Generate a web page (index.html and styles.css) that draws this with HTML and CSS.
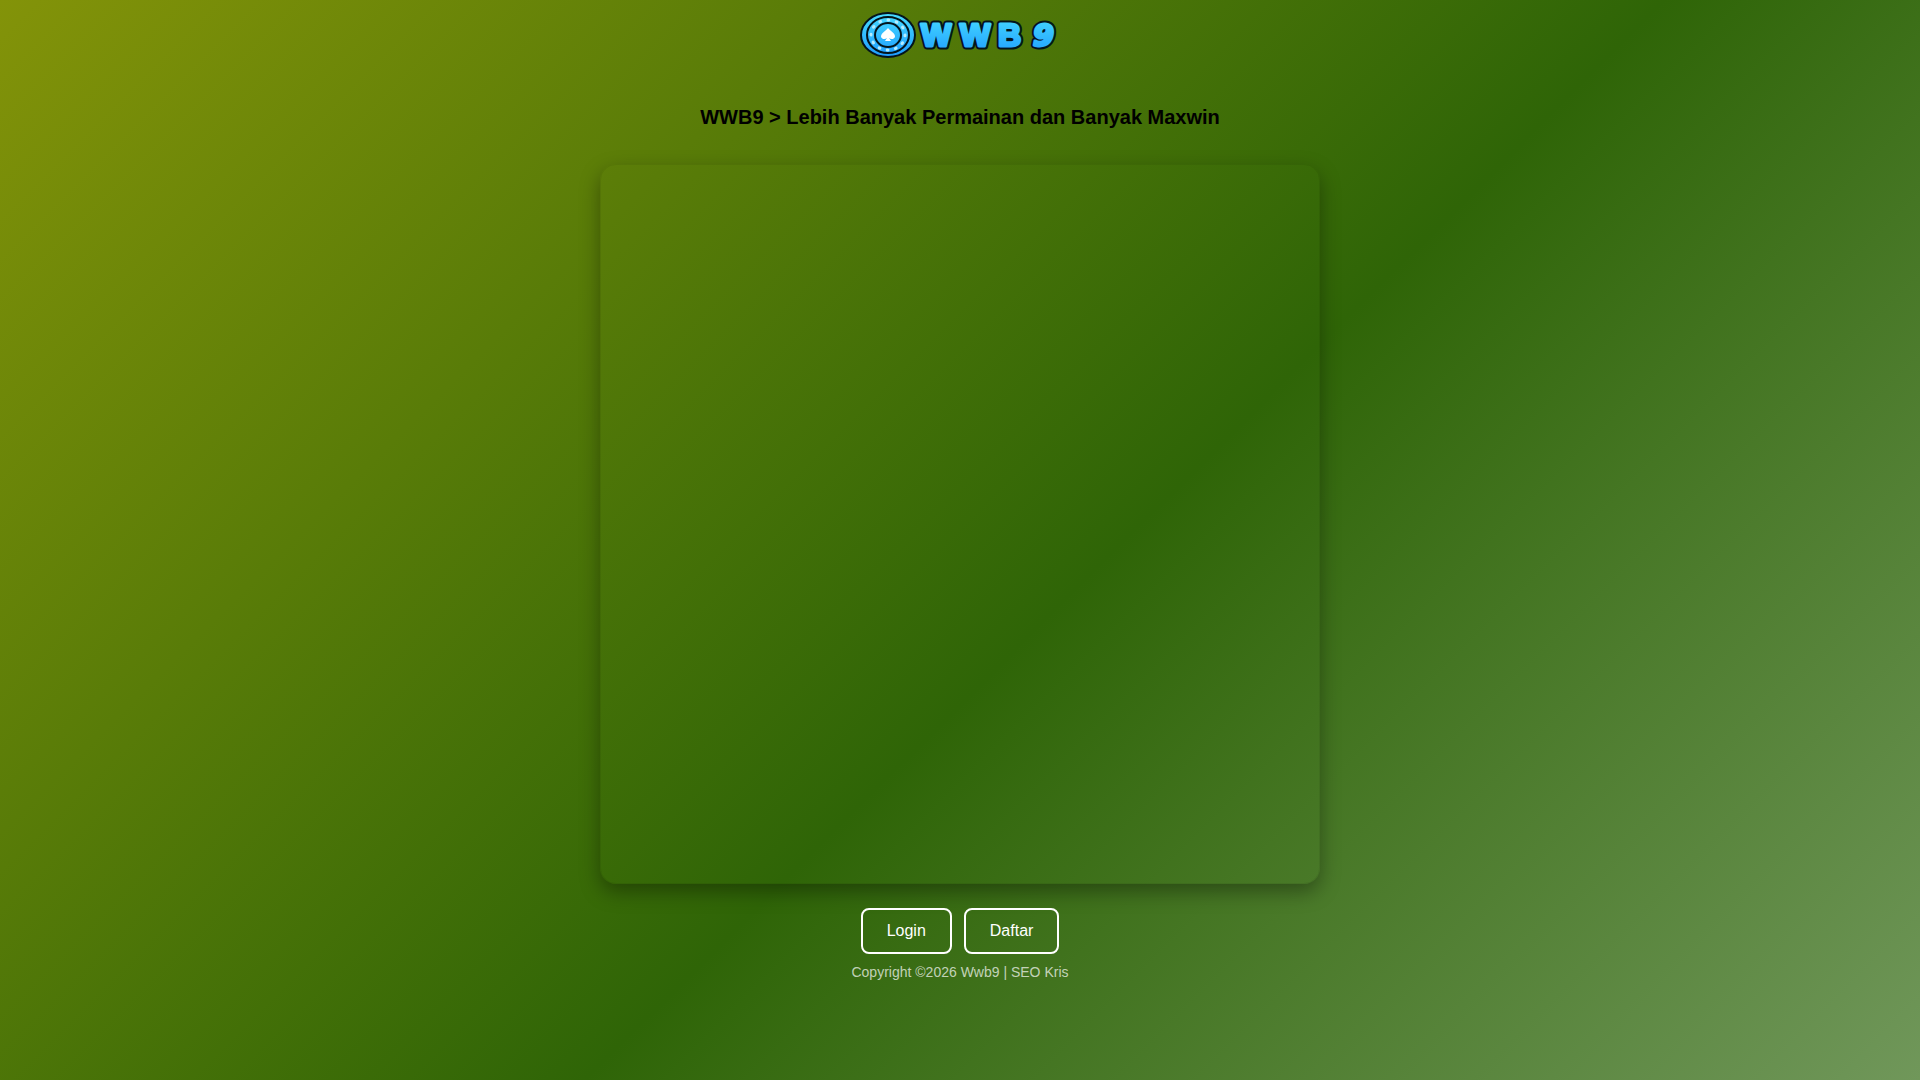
FILE: index.html
```
<!DOCTYPE html>
<html lang="id">
    <head>
        <meta charset="UTF-8">
        <meta name="viewport" content="width=device-width, initial-scale=1">
        <title>WWB9 &gt; Lebih Banyak Permainan dan Banyak Maxwin</title>
        <link rel="stylesheet" href="styles.css">
    </head>
    <body>
        <header class="header">
            <svg class="logo" viewBox="0 0 200 48" role="img" aria-label="WWB9">
                <defs>
                    <linearGradient id="blue" gradientUnits="userSpaceOnUse" x1="0" y1="2" x2="0" y2="46">
                        <stop offset="0" stop-color="#48dcff"/>
                        <stop offset="1" stop-color="#1e9cff"/>
                    </linearGradient>
                </defs>
                <!-- poker chip -->
                <ellipse cx="28" cy="24" rx="27" ry="22" fill="url(#blue)" stroke="#04141c" stroke-width="2"/>
                <ellipse cx="28" cy="24" rx="21" ry="18" fill="url(#blue)" stroke="#04141c" stroke-width="2"/>
                <ellipse class="dots" cx="28" cy="24" rx="17" ry="15" pathLength="120"/>
                <ellipse cx="28" cy="24" rx="13" ry="12" fill="url(#blue)" stroke="#04141c" stroke-width="2"/>
                <path d="M28 17C30 20 35 22 35 25.500C35 28 31 29 29 27L31 30H25L27 27C25 29 21 28 21 25.500C21 22 26 20 28 17Z" fill="#fff"/>
                <text class="word word-edge" x="61 100 138 173" y="35">WWB<tspan class="nine">9</tspan></text>
                <text class="word word-fill" x="61 100 138 173" y="35" aria-hidden="true">WWB<tspan class="nine">9</tspan></text>
            </svg>
        </header>
        <main class="container">
            <h1 class="title">WWB9 &gt; Lebih Banyak Permainan dan Banyak Maxwin</h1>
            <div class="banner"></div>
            <div class="buttons">
                <a class="btn" href="#">Login</a>
                <a class="btn" href="#">Daftar</a>
            </div>
        </main>
        <footer class="footer">Copyright ©2026 Wwb9 | SEO Kris</footer>
    </body>
</html>
```
FILE: styles.css
```
* {
    box-sizing: border-box;
}
body {
    margin: 0;
    min-height: 100vh;
    font-family: "Liberation Sans", Arial, sans-serif;
    background: linear-gradient(135deg, #839309 0%, #2f6507 55.5%, #70975a 100%);
    color: #fff;
    text-align: center;
}
.header {
    display: flex;
    justify-content: center;
    padding-top: 11px;
}
.logo {
    width: 200px;
    height: 48px;
    overflow: visible;
}
.dots {
    fill: none;
    stroke: #b4ecff;
    stroke-width: 3;
    stroke-linecap: round;
    stroke-dasharray: 1 9;
}
.word {
    font-family: "Liberation Sans", Arial, sans-serif;
    font-weight: bold;
    font-size: 32px;
    stroke-linejoin: round;
}
.nine {
    font-family: "DejaVu Sans", sans-serif;
    font-size: 30px;
    font-style: italic;
}
.word-edge {
    fill: #04141c;
    stroke: #04141c;
    stroke-width: 7;
}
.word-fill {
    fill: url(#blue);
    stroke: url(#blue);
    stroke-width: 3;
}
.container {
    display: flex;
    flex-direction: column;
    align-items: center;
    padding: 46px 20px 0;
}
.title {
    margin: 0 0 35px;
    font-size: 20px;
    line-height: 24px;
    color: #000;
}
.banner {
    width: 100%;
    max-width: 720px;
    aspect-ratio: 1;
    border: 1px solid rgba(0,0,0,0.06);
    border-radius: 16px;
    box-shadow: 0 8px 20px rgba(0,0,0,0.35);
}
.buttons {
    display: flex;
    gap: 12px;
    margin-top: 24px;
}
.btn {
    padding: 12px 24px;
    border: 2px solid #fff;
    border-radius: 8px;
    font-size: 16px;
    line-height: 18px;
    color: #fff;
    text-decoration: none;
}
.btn:hover {
    background: rgba(255,255,255,0.2);
}
.footer {
    padding: 10px 20px;
    font-size: 14px;
    line-height: 16px;
    color: rgba(255,255,255,0.7);
}
```
